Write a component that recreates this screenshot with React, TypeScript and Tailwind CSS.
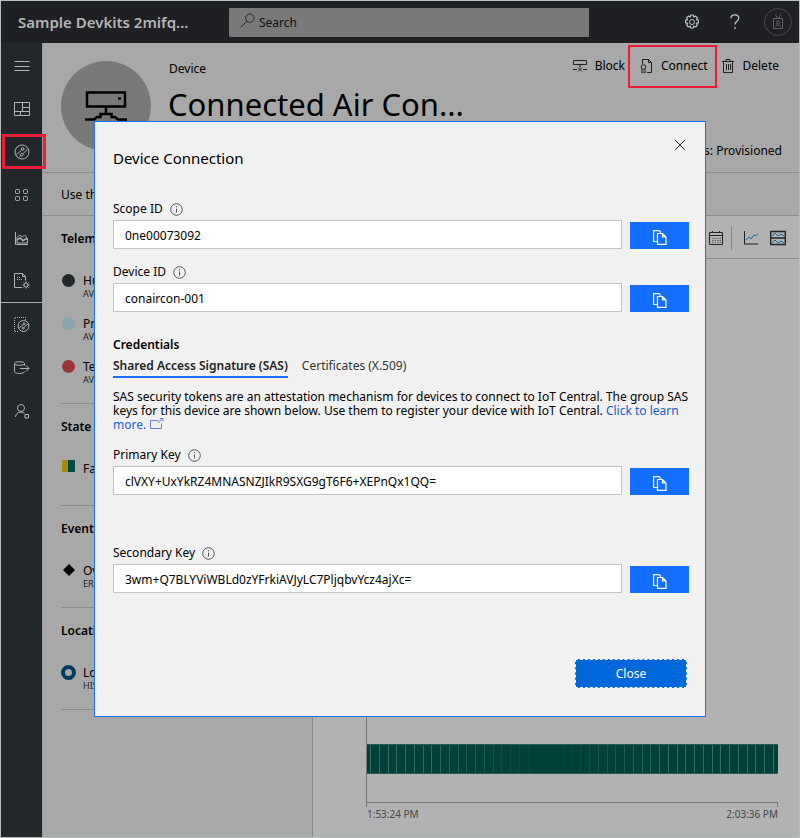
import type { ReactNode } from "react";

function Icon({ size = 16, className = "", children }: { size?: number; className?: string; children: ReactNode }) {
  return (
    <svg
      width={size}
      height={size}
      viewBox="0 0 16 16"
      fill="none"
      stroke="currentColor"
      strokeWidth="1"
      className={`shrink-0 ${className}`}
      aria-hidden="true"
    >
      {children}
    </svg>
  );
}

const railIcons: { label: string; marked?: boolean; icon: ReactNode }[] = [
  { label: "Menu", icon: <path d="M.5 3.5h15M.5 8.500h15M.5 12.5h15" /> },
  { label: "Dashboard", icon: <path d="M.5 1.5h15v13H.5zM8.5 1.5v9M.5 10.5h15M8.5 6.5h7M6.5 10.5v4" /> },
  {
    label: "Devices",
    marked: true,
    icon: (
      <>
        <circle cx="8" cy="8" r="7" />
        <circle cx="8.700" cy="5" r="1.300" />
        <circle cx="7.700" cy="10.700" r="1.300" />
        <path d="M2.200 11 7.700 6M8.800 9.900 13.500 5.200M5 13.500l1.800-1.900" />
      </>
    ),
  },
  {
    label: "Device groups",
    icon: (
      <>
        <rect x="1.5" y="2.5" width="4" height="4" rx="1" />
        <rect x="9.5" y="2.5" width="4" height="4" rx="1" />
        <rect x="1.5" y="9.5" width="4" height="4" rx="1" />
        <rect x="9.5" y="9.5" width="4" height="4" rx="1" />
      </>
    ),
  },
  {
    label: "Analytics",
    icon: (
      <>
        <path d="M1.500 2v12.500H14" />
        <path d="M3 7.500 5.500 5l3 2 2-2 3 3.500v4.500H3z" />
        <path d="m3 10 3-2 3 2.500 4-2" strokeWidth="1.500" />
      </>
    ),
  },
  {
    label: "Jobs",
    icon: (
      <>
        <path d="M8 14.500H.5v-14h8l3 3v4M8.500.5v3h3" />
        <path d="M3 4.500h3M3 6.500h6" strokeDasharray="1 1" />
        <circle cx="12" cy="12" r="2" />
        <path d="M12 8.500v1.500M12 14v1.500M8.500 12H10M14 12h1.500M9.500 9.500l1 1M14.500 9.500l-1 1M9.500 14.500l1-1M14.500 14.500l-1-1" />
      </>
    ),
  },
  {
    label: "Device templates",
    icon: (
      <>
        <path d="M4 14.500H.5V.5h11V3" strokeDasharray="1 1" />
        <circle cx="9.500" cy="9" r="5.500" />
        <circle cx="10" cy="6.800" r="1" />
        <circle cx="9.200" cy="11.200" r="1" />
        <path d="M5 11.300 9.200 7.500M10 10.500l4-3.700" />
      </>
    ),
  },
  {
    label: "Data export",
    icon: (
      <>
        <ellipse cx="5.500" cy="3.500" rx="5" ry="1.800" />
        <path d="M.5 3.500v8c0 1 2 2 5 2s5-1 5-2M10.500 3.500v2M6 8.500h9M12 5.500l3 3-3 3" />
      </>
    ),
  },
  {
    label: "Administration",
    icon: (
      <>
        <circle cx="7" cy="5" r="3.500" />
        <path d="M1.500 14c.3-3 2-5 5.500-5 1.500 0 2.500.5 3.500 1.500" />
        <path d="M11 11.500h3.500V15H11z" />
      </>
    ),
  },
];

function RailButton({ item }: { item: (typeof railIcons)[number] }) {
  return (
    <button aria-label={item.label} className="relative flex h-[43px] w-full items-center justify-center text-[#b0b4b5]">
      <Icon>{item.icon}</Icon>
      {item.marked && <span className="absolute top-1 left-px h-[35px] w-11 border-3 border-[#ed1c34]" />}
    </button>
  );
}

type Row = { name: string; sub: string; mark: ReactNode };

const sections: { title: string; rows: Row[] }[] = [
  {
    title: "Telemetry",
    rows: [
      { name: "Humidity", sub: "AVERAGE", mark: <span className="size-[13px] rounded-full bg-[#202a2b]" /> },
      { name: "Pressure", sub: "AVERAGE", mark: <span className="size-[13px] rounded-full bg-[#8aa4ad]" /> },
      { name: "Temperature", sub: "AVERAGE", mark: <span className="size-[13px] rounded-full bg-[#963534]" /> },
    ],
  },
  {
    title: "State",
    rows: [
      {
        name: "Fan mode",
        sub: "",
        mark: (
          <span className="mb-1 flex h-3 w-[13px]">
            <span className="w-1/2 bg-[#a58c0a]" />
            <span className="w-1/2 bg-[#004d43]" />
          </span>
        ),
      },
    ],
  },
  {
    title: "Event",
    rows: [
      {
        name: "Overheat",
        sub: "ERROR",
        mark: (
          <svg width="14" height="14" viewBox="0 0 14 14" aria-hidden="true">
            <path d="M8 1l6 6-6 6-6-6z" />
          </svg>
        ),
      },
    ],
  },
  {
    title: "Location",
    rows: [
      {
        name: "Location",
        sub: "HISTORY",
        mark: <span className="size-[15px] shrink-0 rounded-full border-4 border-[#043a5b]" />,
      },
    ],
  },
];

function Section({ title, rows }: (typeof sections)[number]) {
  return (
    <section className="border-b border-[#8b8b8b] pt-[13px] pb-[7px]">
      <h2 className="mb-[18px] text-xs leading-5 font-semibold">{title}</h2>
      {rows.map((row) => (
        <div key={row.name} className="flex h-[43px] gap-2 pt-[5px]">
          <span className="flex h-4 w-[14px] items-center justify-center">{row.mark}</span>
          <span className="pt-px">
            <span className="block text-xs leading-4">{row.name}</span>
            <span className="block text-[9px] leading-2.5 text-[#222]">{row.sub}</span>
          </span>
        </div>
      ))}
    </section>
  );
}

const tickCount = 47;
const ticks = Array.from({ length: tickCount }, (_, i) => ({
  x: Math.round(3 + i * 8.76),
  strength: Math.min(0.35, Math.abs(i - 20) * 0.024),
}));

function StateChart() {
  return (
    <div className="flex flex-1 flex-col pr-[21px] pb-4 pl-[53px]">
      <div className="flex flex-1 flex-col justify-end border-b border-l border-[#777] pb-[28px]">
        <svg className="h-[30px] w-full" viewBox="0 0 411 30" preserveAspectRatio="none" role="img" aria-label="Fan mode over time">
          <rect width="411" height="30" fill="#00403a" />
          <path d="M0 .5h411M0 29.500h411" stroke="#2c5e58" />
          {ticks.map((t) => (
            <rect key={t.x} x={t.x} y="1" width="1" height="28" fill="#a5b5b2" opacity={t.strength} />
          ))}
        </svg>
      </div>
      <div className="flex h-1 justify-between">
        <span className="w-px bg-[#777]" />
        <span className="w-px bg-[#777]" />
      </div>
      <div className="flex justify-between pl-px text-[10px] leading-[14px] text-[#484848]">
        <span>1:53:24 PM</span>
        <span>2:03:36 PM</span>
      </div>
    </div>
  );
}

function InfoIcon() {
  return (
    <svg width="13" height="13" viewBox="0 0 13 13" fill="none" stroke="#555" aria-hidden="true">
      <circle cx="6.500" cy="6.500" r="5.800" />
      <path d="M6.500 5.500v4M6.500 3.200v1.200" />
    </svg>
  );
}

function KeyField({ id, label, value, className = "" }: { id: string; label: string; value: string; className?: string }) {
  return (
    <div className={className}>
      <div className="mb-px flex h-5 items-center gap-[7px]">
        <label htmlFor={id} className="text-xs">
          {label}
        </label>
        <InfoIcon />
      </div>
      <div className="flex items-end gap-2">
        <input
          id={id}
          readOnly
          defaultValue={value}
          className="h-[29px] min-w-0 flex-1 border border-[#c3c3c3] bg-white px-[11px] pt-px text-xs outline-none"
        />
        <button aria-label={`Copy ${label}`} className="flex h-[27px] w-[59px] items-center justify-center bg-[#146eff] text-white">
          <svg
            width="14"
            height="15"
            viewBox="0 0 14 15"
            fill="none"
            stroke="currentColor"
            strokeWidth="1.200"
            className="mt-1"
            aria-hidden="true"
          >
            <path d="M4 11.500H.6V.6h5.400L8 2.600" />
            <path d="M4.500 3.500h5l3.500 3.500v7.400H4.500zM9.500 3.500V7H13" />
          </svg>
        </button>
      </div>
    </div>
  );
}

function ConnectionDialog() {
  return (
    <div className="fixed inset-0 flex items-center justify-center">
      <div
        role="dialog"
        aria-labelledby="dialog-title"
        className="relative w-full max-w-[612px] border border-[#1a6dff] bg-[#f1f1f1] pt-[26px] pr-4 pb-7 pl-[18px]"
      >
        <button aria-label="Close dialog" className="absolute top-3 right-[14px] flex size-[22px] items-center justify-center text-[#333]">
          <svg width="12" height="12" viewBox="0 0 12 12" fill="none" stroke="currentColor" aria-hidden="true">
            <path d="M.7.7l10.600 10.600M11.300.7.7 11.300" />
          </svg>
        </button>
        <h2 id="dialog-title" className="mb-[31px] text-[15px] leading-5">
          Device Connection
        </h2>
        <KeyField id="scope" label="Scope ID" value="0ne00073092" />
        <KeyField id="device" label="Device ID" value="conaircon-001" className="mt-[13px]" />
        <h3 className="mt-[23px] text-xs leading-5 font-semibold">Credentials</h3>
        <div role="tablist" className="mt-px flex gap-[14px] text-xs leading-5">
          <button role="tab" aria-selected="true" className="border-b-2 border-[#1a6dff] font-semibold text-[#222]">
            Shared Access Signature (SAS)
          </button>
          <button role="tab" aria-selected="false" className="border-b-2 border-transparent text-[#333]">
            Certificates (X.509)
          </button>
        </div>
        <p className="mt-3 text-xs leading-[14px]">
          SAS security tokens are an attestation mechanism for devices to connect to IoT Central. The group SAS keys for this
          device are shown below. Use them to register your device with IoT Central.{" "}
          <a href="#learn" className="text-[#1462d6]">
            Click to learn more.
            <svg width="14" height="11" viewBox="0 0 14 11" fill="none" stroke="#6a7fe0" className="ml-1 inline-block align-baseline" aria-hidden="true">
              <path d="M8.500 2.500h-8v8h11V5.500M8 5l4.500-4M10 .5h3v3" />
            </svg>
          </a>
        </p>
        <KeyField id="primary" label="Primary Key" value="clVXY+UxYkRZ4MNASNZJIkR9SXG9gT6F6+XEPnQx1QQ=" className="mt-[13px]" />
        <KeyField id="secondary" label="Secondary Key" value="3wm+Q7BLYViWBLd0zYFrkiAVJyLC7PljqbvYcz4ajXc=" className="mt-12" />
        <div className="mt-[66px] flex justify-end pr-0.5">
          <button className="h-[29px] w-28 border border-dashed border-white bg-[#0067db] pt-px text-xs text-white">Close</button>
        </div>
      </div>
    </div>
  );
}

function TopBar() {
  return (
    <header className="flex h-[42px] items-center bg-[#1e2023] pr-[7px] pl-[17px] text-[#b4b4b4]">
      <h1 className="w-[211px] shrink-0 truncate text-[15px] font-semibold">Sample Devkits 2mifq...</h1>
      <div className="relative w-[360px] text-black">
        <Icon className="absolute top-[5px] left-[11px] text-[#222]" size={15}>
          <circle cx="10.500" cy="5.500" r="4.500" />
          <path d="m7.300 8.700-6.500 6.500" />
        </Icon>
        <input
          type="search"
          aria-label="Search"
          placeholder="Search"
          className="h-[29px] w-full rounded-[1px] bg-[#797979] pl-[30px] text-xs outline-none placeholder:text-[#111]"
        />
      </div>
      <div className="ml-auto flex items-center">
        <button aria-label="Settings" className="mr-[30px]">
          <Icon className="text-[#b8c4cc]">
            <circle cx="8" cy="8" r="2.500" />
            <path
              d="M6.700 1h2.600l.5 2 1.800-1 1.800 1.800-1 1.800 2 .5v2.800l-2 .5 1 1.800-1.800 1.800-1.800-1-.5 2H6.700l-.5-2-1.800 1-1.800-1.800 1-1.800-2-.5V6.100l2-.5-1-1.800L4.400 2l1.800 1z"
              strokeLinejoin="round"
              strokeWidth="1.200"
            />
          </Icon>
        </button>
        <button aria-label="Help" className="mr-6">
          <svg width="10" height="16" viewBox="0 0 10 16" fill="none" stroke="#b8c4cc" strokeWidth="1.300" aria-hidden="true">
            <path d="M1 4.200C1 2 2.700.8 4.800.8s3.900 1.300 3.900 3.400c0 3-3.700 3.200-3.700 6.300M5 13v2" />
          </svg>
        </button>
        <button aria-label="Account" className="flex size-7 items-center justify-center rounded-full border border-[#4a4a4a] text-[#626262]">
          <Icon>
            <path d="M3.500 4.500h9v10h-9zM5.500.5l2 4M10.500.5l-2 4M5.500 12.500c.3-2 4.700-2 5 0" />
            <circle cx="8" cy="8.500" r="1.500" />
          </Icon>
        </button>
      </div>
    </header>
  );
}

function Rail() {
  return (
    <nav className="w-[41px] shrink-0 bg-[#23272b] pt-px">
      {railIcons.slice(0, 6).map((item) => (
        <RailButton key={item.label} item={item} />
      ))}
      <hr className="border-[#aaa]" />
      {railIcons.slice(6).map((item) => (
        <RailButton key={item.label} item={item} />
      ))}
    </nav>
  );
}

function DeviceHeader() {
  return (
    <div className="flex h-[130px] border-b border-[#8b8b8b] pr-[17px] pl-[18px]">
      <div className="mt-[18px] flex size-[90px] shrink-0 items-center justify-center rounded-full bg-[#797979]">
        <svg width="42" height="30" viewBox="0 0 42 30" fill="none" stroke="#000" strokeWidth="2.500" aria-hidden="true">
          <path d="M2 1.500h38v14H2zM21 15v7M0 28.500h9l3-2.500h3.500v-3h11v3H30l3 2.500h9" />
          <path d="M33 7.500h3" />
        </svg>
      </div>
      <div className="ml-[17px] min-w-0 flex-1 pt-4">
        <p className="pl-px text-xs leading-5">Device</p>
        <p className="truncate text-[31px] leading-[51px]">Connected Air Con...</p>
      </div>
      <div className="flex shrink-0 flex-col items-end justify-between pt-[13px] pb-[11px]">
        <div className="flex text-xs leading-5">
          <button className="flex items-center gap-[7px]">
            <Icon className="text-[#222]">
              <path d="M1.500 2.500h13v4h-13zM8 6.500v3M1 11.500h4M11 11.500h4M6 9.500l4 4M10 9.500l-4 4" />
            </Icon>
            Block
          </button>
          <button className="relative ml-[14px] flex items-center gap-1.5">
            <Icon className="text-[#222]">
              <path d="M3.500 6V1.500h6l3 3v10H8M9.500 1.500v3h3" />
              <circle cx="4.500" cy="9" r="2.300" />
              <path d="M3 11v4l1.500-1L6 15v-4" />
            </Icon>
            Connect
            <span className="absolute -top-[11px] -right-[9px] -left-[11px] h-[43px] border-2 border-[#ed1c34]" />
          </button>
          <button className="mr-[3px] ml-3 flex items-center gap-[7px]">
            <Icon className="text-[#222]">
              <path d="M2 3.500h12M6 3V1.500h4V3M3.500 3.500v11h9v-11M6.500 6v6M8.500 6v6M10.500 6v6" />
            </Icon>
            Delete
          </button>
        </div>
        <p className="text-xs leading-5">Device status: Provisioned</p>
      </div>
    </div>
  );
}

function ChartToolbar() {
  return (
    <div className="flex h-[43px] items-center justify-end border-b border-[#8b8b8b] pt-0.5 pr-[13px] text-[#222]">
      <button aria-label="Time range">
        <Icon>
          <path d="M1.500 2.500h13v12h-13zM1.500 5.500h13M4.500 1v2M11.500 1v2" />
          <path d="M4 8.500h9M4 10.500h9M4 12.500h9" stroke="#596b7c" strokeDasharray="1.500 1" />
        </Icon>
      </button>
      <span className="mr-[11px] ml-[7px] h-6 w-px bg-[#858585]" />
      <button aria-label="Line chart" className="mr-[11px]">
        <Icon>
          <path d="M1.500 1v13H15" />
          <path d="m3 10 3-3 2 2 3-4 1.500 1L15 3.500" stroke="#17669c" />
        </Icon>
      </button>
      <button aria-label="Stacked charts">
        <Icon>
          <path d="M.7 1.500h14.600v13H.7zM.7 8h14.600" strokeWidth="1.400" />
          <path d="m2 6 3-3 3 3 3-2 3 2M2 13l3-3 3 3 3-2 3 2" stroke="#17669c" />
        </Icon>
      </button>
    </div>
  );
}

export default function App() {
  return (
    <div className="flex min-h-screen flex-col border border-[#b4bfb9] bg-[#a8a8a8] font-['Noto_Sans','Open_Sans',sans-serif] text-black">
      <TopBar />
      <div className="flex flex-1">
        <Rail />
        <main className="flex min-w-0 flex-1 flex-col border-l border-[#9b9b9b]">
          <DeviceHeader />
          <p className="h-[43px] border-b border-[#8b8b8b] pl-[18px] text-xs leading-[43px]">Use the views</p>
          <div className="flex flex-1">
            <aside className="w-[270px] shrink-0 border-r border-[#8b8b8b] px-[18px]">
              {sections.map((s) => (
                <Section key={s.title} {...s} />
              ))}
            </aside>
            <div className="flex min-w-0 flex-1 flex-col bg-[#b2b2b2]">
              <ChartToolbar />
              <StateChart />
            </div>
          </div>
        </main>
      </div>
      <ConnectionDialog />
    </div>
  );
}
